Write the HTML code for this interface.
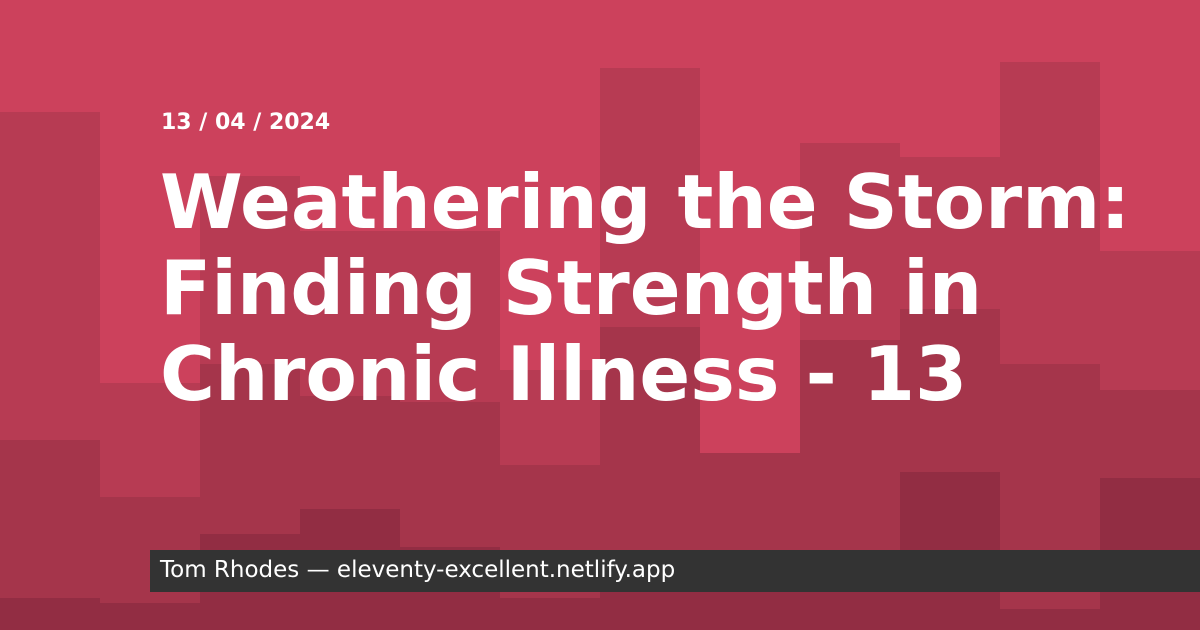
<!DOCTYPE html>
<html><head><style>
body{margin:0;width:1200px;height:630px;overflow:hidden;position:relative;background:#cc415c;font-family:"DejaVu Sans","Liberation Sans",sans-serif}
.c{position:absolute;width:100px}
.date{position:absolute;left:161px;top:110px;color:#fff;font-weight:bold;font-size:22px}
.title{position:absolute;left:160px;top:159px;color:#fff;font-weight:bold;font-size:75px;line-height:86px;white-space:nowrap}
.bar{position:absolute;left:150px;top:550px;width:1050px;height:42px;background:#333}
.bar span{position:absolute;left:10px;top:7px;color:#fff;font-size:23px}
</style></head><body>
<div id="bg"></div>
<script>
var cols=[[0,112,440,598],[383,383,497,603],[176,176,364,534],[231,231,396,509],[231,231,402,547],[370,370,465,598],[68,68,327,590],[453,453,453,590],[143,143,340,590],[157,157,309,472],[62,62,364,609],[251,251,390,478]];
var h='';
cols.forEach(function(c,i){
 h+='<div class="c" style="left:'+i*100+'px;top:'+c[1]+'px;height:'+(630-c[1])+'px;background:#b73b53"></div>';
 h+='<div class="c" style="left:'+i*100+'px;top:'+c[2]+'px;height:'+(630-c[2])+'px;background:#a5354b"></div>';
 h+='<div class="c" style="left:'+i*100+'px;top:'+c[3]+'px;height:'+(630-c[3])+'px;background:#922d43"></div>';
});
document.getElementById('bg').innerHTML=h;
</script>
<div class="date">13 / 04 / 2024</div>
<div class="title">Weathering the Storm:<br>Finding Strength in<br>Chronic Illness - 13</div>
<div class="bar"><span>Tom Rhodes — eleventy-excellent.netlify.app</span></div>
</body></html>
